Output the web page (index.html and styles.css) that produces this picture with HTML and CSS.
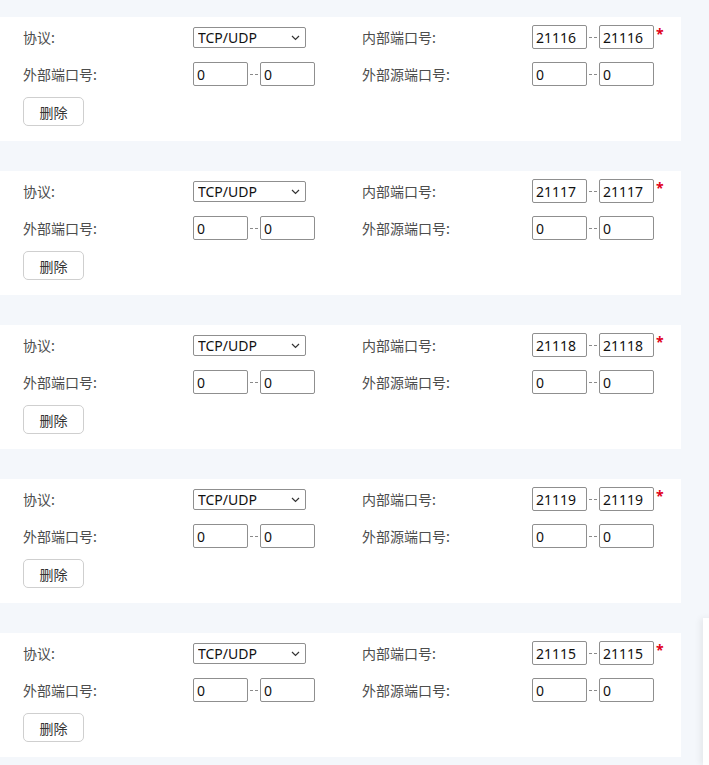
FILE: index.html
```html
<!DOCTYPE html>
<html lang="zh-CN">
<head>
<meta charset="utf-8">
<title>端口映射</title>
<link rel="stylesheet" href="styles.css">
</head>
<body>
<div class="list">
  <div class="card">
    <div class="label">协议:</div>
    <div class="field"><span class="sel-wrap"><select class="sel"><option>TCP/UDP</option></select><svg class="chev" width="9" height="6" viewBox="0 0 9 6"><path d="M1 1l3.5 3.5L8 1" fill="none" stroke="#333" stroke-width="1.2"/></svg></span></div>
    <div class="label">内部端口号:</div>
    <div class="field"><input class="inp" value="21116"><span class="dash"><i></i><i></i></span><input class="inp" value="21116"><span class="req">*</span></div>
    <div class="label">外部端口号:</div>
    <div class="field"><input class="inp" value="0"><span class="dash"><i></i><i></i></span><input class="inp" value="0"></div>
    <div class="label">外部源端口号:</div>
    <div class="field"><input class="inp" value="0"><span class="dash"><i></i><i></i></span><input class="inp" value="0"></div>
    <div class="actions"><button class="btn">删除</button></div>
  </div>
  <div class="card">
    <div class="label">协议:</div>
    <div class="field"><span class="sel-wrap"><select class="sel"><option>TCP/UDP</option></select><svg class="chev" width="9" height="6" viewBox="0 0 9 6"><path d="M1 1l3.5 3.5L8 1" fill="none" stroke="#333" stroke-width="1.2"/></svg></span></div>
    <div class="label">内部端口号:</div>
    <div class="field"><input class="inp" value="21117"><span class="dash"><i></i><i></i></span><input class="inp" value="21117"><span class="req">*</span></div>
    <div class="label">外部端口号:</div>
    <div class="field"><input class="inp" value="0"><span class="dash"><i></i><i></i></span><input class="inp" value="0"></div>
    <div class="label">外部源端口号:</div>
    <div class="field"><input class="inp" value="0"><span class="dash"><i></i><i></i></span><input class="inp" value="0"></div>
    <div class="actions"><button class="btn">删除</button></div>
  </div>
  <div class="card">
    <div class="label">协议:</div>
    <div class="field"><span class="sel-wrap"><select class="sel"><option>TCP/UDP</option></select><svg class="chev" width="9" height="6" viewBox="0 0 9 6"><path d="M1 1l3.5 3.5L8 1" fill="none" stroke="#333" stroke-width="1.2"/></svg></span></div>
    <div class="label">内部端口号:</div>
    <div class="field"><input class="inp" value="21118"><span class="dash"><i></i><i></i></span><input class="inp" value="21118"><span class="req">*</span></div>
    <div class="label">外部端口号:</div>
    <div class="field"><input class="inp" value="0"><span class="dash"><i></i><i></i></span><input class="inp" value="0"></div>
    <div class="label">外部源端口号:</div>
    <div class="field"><input class="inp" value="0"><span class="dash"><i></i><i></i></span><input class="inp" value="0"></div>
    <div class="actions"><button class="btn">删除</button></div>
  </div>
  <div class="card">
    <div class="label">协议:</div>
    <div class="field"><span class="sel-wrap"><select class="sel"><option>TCP/UDP</option></select><svg class="chev" width="9" height="6" viewBox="0 0 9 6"><path d="M1 1l3.5 3.5L8 1" fill="none" stroke="#333" stroke-width="1.2"/></svg></span></div>
    <div class="label">内部端口号:</div>
    <div class="field"><input class="inp" value="21119"><span class="dash"><i></i><i></i></span><input class="inp" value="21119"><span class="req">*</span></div>
    <div class="label">外部端口号:</div>
    <div class="field"><input class="inp" value="0"><span class="dash"><i></i><i></i></span><input class="inp" value="0"></div>
    <div class="label">外部源端口号:</div>
    <div class="field"><input class="inp" value="0"><span class="dash"><i></i><i></i></span><input class="inp" value="0"></div>
    <div class="actions"><button class="btn">删除</button></div>
  </div>
  <div class="card">
    <div class="label">协议:</div>
    <div class="field"><span class="sel-wrap"><select class="sel"><option>TCP/UDP</option></select><svg class="chev" width="9" height="6" viewBox="0 0 9 6"><path d="M1 1l3.5 3.5L8 1" fill="none" stroke="#333" stroke-width="1.2"/></svg></span></div>
    <div class="label">内部端口号:</div>
    <div class="field"><input class="inp" value="21115"><span class="dash"><i></i><i></i></span><input class="inp" value="21115"><span class="req">*</span></div>
    <div class="label">外部端口号:</div>
    <div class="field"><input class="inp" value="0"><span class="dash"><i></i><i></i></span><input class="inp" value="0"></div>
    <div class="label">外部源端口号:</div>
    <div class="field"><input class="inp" value="0"><span class="dash"><i></i><i></i></span><input class="inp" value="0"></div>
    <div class="actions"><button class="btn">删除</button></div>
  </div>
</div>
<div class="side-panel"></div>
</body>
</html>
```
FILE: styles.css
```css
html, body {
  margin: 0;
  padding: 0;
}
body {
  background: #f4f7fb;
  font-family: "Noto Sans", "Noto Sans CJK SC", sans-serif;
  font-size: 14px;
  color: #4a4a4a;
  height: 765px;
  overflow: hidden;
  position: relative;
}
.list {
  display: flex;
  flex-direction: column;
  gap: 30px;
  padding-top: 17px;
}
.card {
  width: 681px;
  height: 124px;
  box-sizing: border-box;
  background: #fff;
  padding: 7px 0 0 23px;
  display: grid;
  grid-template-columns: 170px 169px 170px 1fr;
  grid-template-rows: 26px 26px 29px;
  row-gap: 11px;
  align-items: center;
}
.label {
  line-height: 20px;
  color: #4d4d4d;
  font-family: "Noto Sans CJK SC", sans-serif;
}
.field {
  display: flex;
  align-items: center;
  height: 26px;
}
.actions {
  grid-column: 1 / 3;
  align-self: start;
  margin-top: -1px;
}
.sel-wrap {
  position: relative;
  display: inline-block;
  width: 113px;
  height: 21px;
}
.sel {
  appearance: none;
  -webkit-appearance: none;
  width: 113px;
  height: 21px;
  box-sizing: border-box;
  border: 1px solid #8f8f8f;
  border-radius: 2px;
  background: #fff;
  font-family: "Noto Sans", sans-serif;
  font-size: 14px;
  color: #111;
  padding: 0 0 0 4px;
  margin: 0;
  line-height: 19px;
}
.chev {
  position: absolute;
  right: 6px;
  top: 8px;
  pointer-events: none;
}
.inp {
  width: 55px;
  height: 24px;
  box-sizing: border-box;
  border: 1px solid #8f8f8f;
  border-radius: 2px;
  padding: 0 0 0 3px;
  margin: 0;
  font-family: "Noto Sans", sans-serif;
  font-size: 14px;
  color: #111;
  background: #fff;
}
.dash {
  width: 12px;
  display: flex;
  justify-content: center;
  gap: 2px;
}
.dash i {
  display: block;
  width: 3px;
  height: 1px;
  background: #8a8a8a;
}
.req {
  color: #e0001b;
  font-weight: bold;
  font-size: 14px;
  align-self: flex-start;
  margin-left: 2px;
  line-height: 14px;
  margin-top: 3px;
}
.btn {
  width: 61px;
  height: 29px;
  box-sizing: border-box;
  border: 1px solid #cfcfcf;
  border-radius: 5px;
  background: #fff;
  font-family: "Noto Sans CJK SC", sans-serif;
  font-size: 14px;
  color: #333;
  padding: 0;
}
.side-panel {
  position: absolute;
  left: 703px;
  top: 618px;
  width: 20px;
  height: 147px;
  background: #fff;
  box-shadow: -3px 0 6px rgba(0, 0, 0, 0.06);
}
```
